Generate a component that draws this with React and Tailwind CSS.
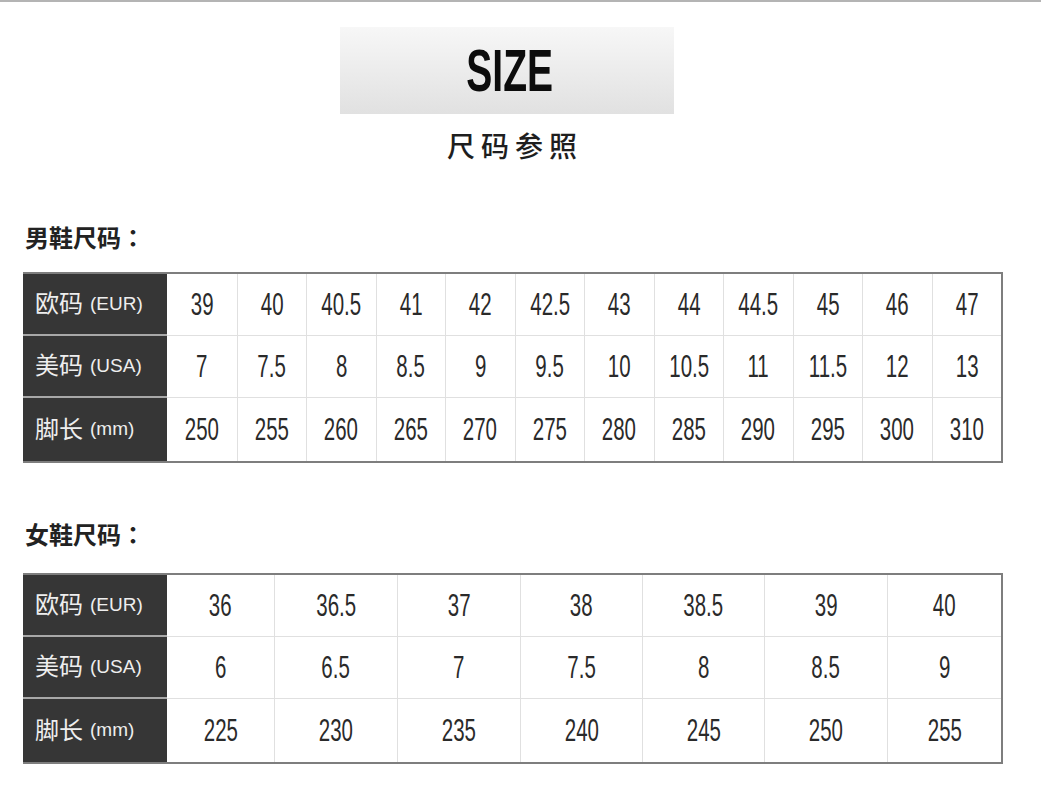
import React from 'react';

const cjk = { fontFamily: '"Liberation Sans", "Noto Sans CJK SC", sans-serif' };

const men = {
  eur: ['39', '40', '40.5', '41', '42', '42.5', '43', '44', '44.5', '45', '46', '47'],
  usa: ['7', '7.5', '8', '8.5', '9', '9.5', '10', '10.5', '11', '11.5', '12', '13'],
  mm: ['250', '255', '260', '265', '270', '275', '280', '285', '290', '295', '300', '310'],
};

const women = {
  eur: ['36', '36.5', '37', '38', '38.5', '39', '40'],
  usa: ['6', '6.5', '7', '7.5', '8', '8.5', '9'],
  mm: ['225', '230', '235', '240', '245', '250', '255'],
};

const labels = [
  { key: 'eur', zh: '欧码', en: '(EUR)' },
  { key: 'usa', zh: '美码', en: '(USA)' },
  { key: 'mm', zh: '脚长', en: '(mm)' },
];

function Num({ children }) {
  return (
    <span className="inline-block scale-x-[0.66] text-[31px] leading-none text-[#2a2a2a]" style={{ fontFamily: '"Liberation Sans", sans-serif' }}>
      {children}
    </span>
  );
}

function SizeTable({ data, cols }) {
  return (
    <div className={`grid ${cols} border-2 border-l-0 border-[#7e7e7e] w-[980px] ml-[23px]`}>
      {labels.map((row, r) => {
        const last = r === labels.length - 1;
        return (
          <React.Fragment key={row.key}>
            <div
              className={`flex items-center pl-[12px] bg-[#363636] text-[#eeeeee] ${last ? 'h-[63px]' : 'h-[62px] border-b-2 border-[#a8a8a8]'}`}
              style={cjk}
            >
              <span className="text-[24px]">{row.zh}</span>
              <span className="text-[19px] ml-[7px]">{row.en}</span>
            </div>
            {data[row.key].map((v, i) => (
              <div
                key={i}
                className={`flex items-center justify-center ${i > 0 ? 'border-l border-[#e0e0e0]' : ''} ${last ? 'h-[63px]' : 'h-[62px] border-b border-[#e0e0e0]'}`}
              >
                <Num>{v}</Num>
              </div>
            ))}
          </React.Fragment>
        );
      })}
    </div>
  );
}

function Heading({ children }) {
  return (
    <div className="ml-[25px] text-[24px] leading-[30px] font-bold text-[#222]" style={cjk}>
      {children}
      <span style={{ fontFamily: '"Noto Sans CJK TC", sans-serif' }}>：</span>
    </div>
  );
}

export default function App() {
  return (
    <div className="w-[1041px] h-[808px] bg-white overflow-hidden">
      <div className="h-[2px] bg-[#b4b4b4]" />

      {/* header */}
      <div className="mt-[25px] ml-[340px] w-[334px] h-[87px] flex items-center justify-center bg-gradient-to-b from-[#f7f7f7] to-[#e1e1e1]">
        <span
          className="inline-block scale-x-[0.65] text-[60px] font-bold leading-none text-[#0c0c0c] ml-[6px] mt-[1px]"
          style={{ fontFamily: '"Liberation Sans", sans-serif' }}
        >
          SIZE
        </span>
      </div>
      <div className="mt-[16px] ml-[447px] text-[28px] leading-[36px] tracking-[6px] font-medium text-[#1e1e1e]" style={cjk}>
        尺码参照
      </div>

      {/* men */}
      <div className="mt-[56px]">
        <Heading>男鞋尺码</Heading>
      </div>
      <div className="mt-[18px]">
        <SizeTable data={men} cols="grid-cols-[144px_repeat(12,1fr)]" />
      </div>

      {/* women */}
      <div className="mt-[56px]">
        <Heading>女鞋尺码</Heading>
      </div>
      <div className="mt-[22px]">
        <SizeTable data={women} cols="grid-cols-[144px_107px_123px_123px_122px_122px_123px_1fr]" />
      </div>
    </div>
  );
}
